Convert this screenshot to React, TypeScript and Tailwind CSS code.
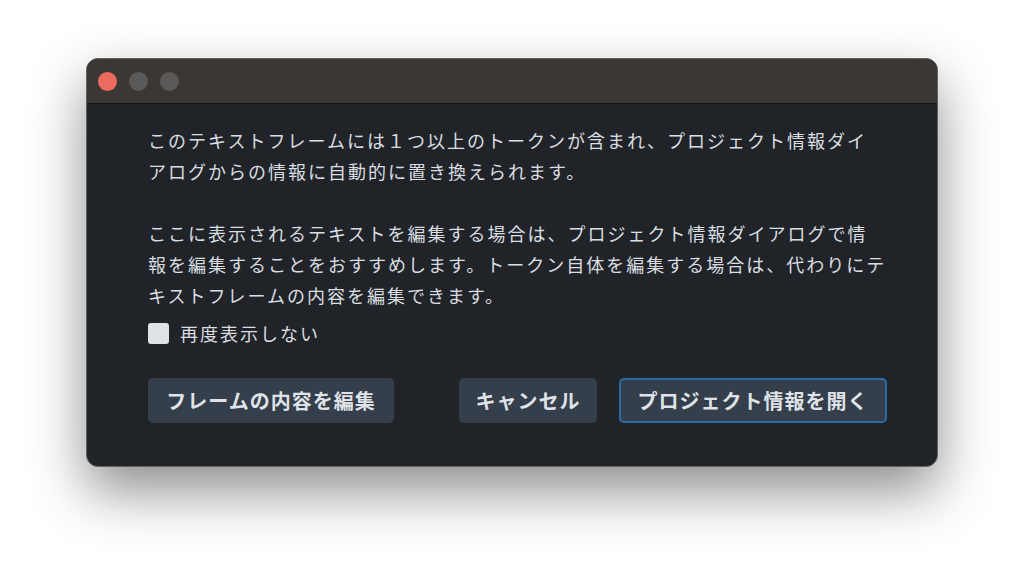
import React from 'react';

const jp = { fontFamily: '"Noto Sans CJK JP", "Noto Sans", sans-serif' };

function TrafficLights() {
  return (
    <div className="flex items-center gap-[12px] pl-[11px]">
      <span className="w-[19px] h-[19px] rounded-full bg-[#ec6a5e]" />
      <span className="w-[19px] h-[19px] rounded-full bg-[#5b5958]" />
      <span className="w-[19px] h-[19px] rounded-full bg-[#5b5958]" />
    </div>
  );
}

export default function App() {
  return (
    <div className="w-[1024px] h-[581px] bg-white pt-[58px] pl-[86px]" style={jp}>
      <div className="w-[852px] h-[409px] rounded-[12px] border border-[#626262] bg-[#202428] overflow-hidden flex flex-col shadow-[0_24px_55px_rgba(0,0,0,0.45)]">
        <div className="h-[45px] shrink-0 bg-[#3a3735] border-b border-[#141414] flex items-center">
          <TrafficLights />
        </div>

        <div className="flex-1 pl-[61px] pr-[50px] pt-[21px] text-[#dadde1]">
          <div className="text-[18px] leading-[31px] tracking-[2px]">
            <p>
              このテキストフレームには１つ以上のトークンが含まれ、プロジェクト情報ダイ
              <br />
              アログからの情報に自動的に置き換えられます。
            </p>
            <p className="mt-[31px]">
              ここに表示されるテキストを編集する場合は、プロジェクト情報ダイアログで情
              <br />
              報を編集することをおすすめします。トークン自体を編集する場合は、代わりにテ
              <br />
              キストフレームの内容を編集できます。
            </p>
          </div>

          <label className="mt-[7px] flex items-center gap-[11px] h-[31px]">
            <span className="w-[21px] h-[21px] rounded-[3px] bg-[#dfe3e8]" />
            <span className="text-[18px] tracking-[2px]">再度表示しない</span>
          </label>

          <div className="mt-[29px] flex items-center">
            <button className="w-[246px] h-[45px] rounded-[5px] bg-[#353e4b] text-[20px] font-bold tracking-[1px] text-[#dfe2e6]">
              フレームの内容を編集
            </button>
            <div className="flex-1" />
            <button className="w-[138px] h-[45px] rounded-[5px] bg-[#353e4b] text-[20px] font-bold tracking-[1px] text-[#dfe2e6]">
              キャンセル
            </button>
            <button className="ml-[22px] w-[268px] h-[45px] rounded-[5px] border-2 border-[#2c6aa6] bg-[#353e4b] text-[20px] font-bold tracking-[1px] text-[#dfe2e6]">
              プロジェクト情報を開く
            </button>
          </div>
        </div>
      </div>
    </div>
  );
}
